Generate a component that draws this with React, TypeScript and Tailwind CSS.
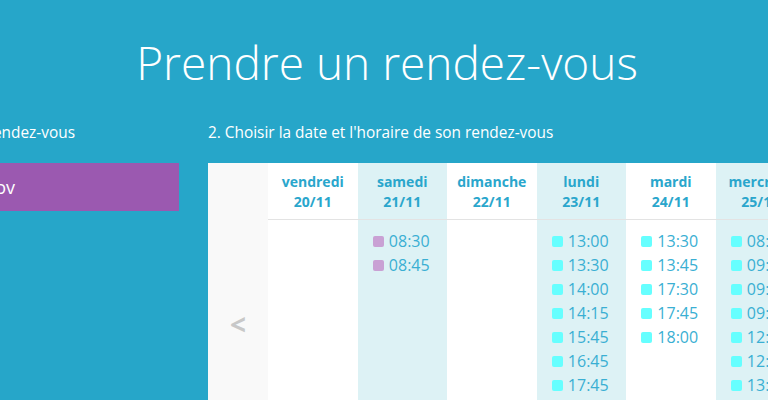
import React from "react";

type Day = { name: string; date: string; hl: boolean; slots: string[]; purple?: boolean };

const days: Day[] = [
  { name: "vendredi", date: "20/11", hl: false, slots: [] },
  { name: "samedi", date: "21/11", hl: true, slots: ["08:30", "08:45"], purple: true },
  { name: "dimanche", date: "22/11", hl: false, slots: [] },
  { name: "lundi", date: "23/11", hl: true, slots: ["13:00", "13:30", "14:00", "14:15", "15:45", "16:45", "17:45", "18:00"] },
  { name: "mardi", date: "24/11", hl: false, slots: ["13:30", "13:45", "17:30", "17:45", "18:00"] },
  { name: "mercredi", date: "25/11", hl: true, slots: ["08:30", "09:00", "09:15", "09:30", "12:00", "12:15", "13:00", "13:15"] },
  { name: "jeudi", date: "26/11", hl: false, slots: ["09:00"] },
];

export default function App() {
  return (
    <div
      className="w-[768px] h-[400px] overflow-hidden bg-[#26a6c9] text-white"
      style={{ fontFamily: '"Open Sans", "Noto Sans", sans-serif' }}
    >
      <div className="pt-[31px] h-[118px] flex justify-center">
        <h1 className="text-[46px] font-light leading-[62px] pl-[6px]">Prendre un rendez-vous</h1>
      </div>
      <div className="flex">
        <div className="w-[179px] shrink-0 mr-[29px]">
          <div className="h-[45px] flex">
            <div className="w-[75px] flex justify-end whitespace-nowrap text-[15.4px] leading-[30px]">
              1. Choisir le praticien du rendez-vous
            </div>
          </div>
          <div className="h-[48px] bg-[#9b59b0] flex items-center">
            <div className="w-[15px] flex justify-end whitespace-nowrap text-[18px]">Dr Petrov</div>
          </div>
        </div>
        <div className="shrink-0">
          <div className="h-[45px] text-[15.4px] leading-[30px] whitespace-nowrap">
            2. Choisir la date et l'horaire de son rendez-vous
          </div>
          <div className="flex h-[322px] bg-white">
            <div className="w-[60px] shrink-0 bg-[#f9f9f9] flex items-center justify-center">
              <span className="text-[28px] font-bold text-[#c8c8c8] leading-none">&lt;</span>
            </div>
            {days.map((d) => (
              <div
                key={d.name}
                className={`w-[89.5px] shrink-0 flex flex-col ${d.hl ? "bg-[#ddf2f5]" : "bg-white"}`}
              >
                <div className="h-[57px] border-b border-[#e3e3e3] flex flex-col items-center justify-center pt-[2px] text-[14px] font-bold leading-[20px] text-[#2aa6cc]">
                  <span>{d.name}</span>
                  <span>{d.date}</span>
                </div>
                <div className="pt-[9px] flex flex-col">
                  {d.slots.map((s) => (
                    <div key={s} className="h-[24px] flex items-center justify-center gap-[5px] pr-[2px]">
                      <span
                        className={`w-[11px] h-[11px] rounded-[2px] ${d.purple ? "bg-[#c9a1d4]" : "bg-[#66ffff]"}`}
                      />
                      <span className="text-[16px] text-[#3aafd3] leading-[24px]">{s}</span>
                    </div>
                  ))}
                </div>
              </div>
            ))}
          </div>
        </div>
      </div>
    </div>
  );
}
